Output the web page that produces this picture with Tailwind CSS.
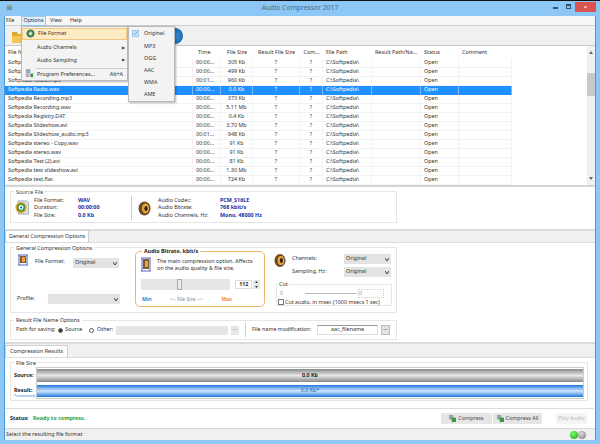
<!DOCTYPE html>
<html lang="en">
<head>
  <meta charset="UTF-8">
  <title>Audio Compressor 2017</title>
  <script src="https://cdn.jsdelivr.net/npm/@tailwindcss/browser@4"></script>
</head>
<body class="bg-[#8cc7f5] text-[#333] font-['Noto_Sans',sans-serif] text-[5.4px] leading-none overflow-hidden">
  <div class="relative w-[600px] h-[444px] overflow-hidden">
    <!-- title bar -->
    <div class="h-[1px] bg-[#111]"></div>
    <div class="relative h-[15px] flex items-center justify-center text-[6.8px] text-[#4b6b86]">
      <svg class="absolute left-[6px] top-[3px] w-[7px] h-[7px]" viewBox="0 0 8 8"><rect x="1" y="2" width="6" height="5" fill="#6f94ad"/><rect x="3" y="0" width="2" height="3" fill="#c9a968"/></svg>
      <span>Audio Compressor 2017</span>
      <div class="absolute left-[553px] top-[6px] w-[5px] h-[1.5px] bg-[#33536b]"></div>
      <div class="absolute left-[566px] top-[3px] w-[5px] h-[5px] border border-[#33536b] border-t-2"></div>
      <div class="absolute left-[575px] top-[1px] w-[21px] h-[10px] bg-[#d9534f] flex items-center justify-center text-white text-[6px] font-bold">×</div>
    </div>

    <div class="mx-[4px] w-[592px] border-x border-[#4a9ae0]">
      <!-- menu bar -->
      <div class="h-[10px] bg-[#f6f6f6] border-b border-[#cfcfcf] flex items-center">
        <span class="pl-[1px] w-[16px]">File</span>
        <span class="w-[25px] h-[10px] flex items-center justify-center bg-[#e5f1fb] border border-[#9cc8ea]">Options</span>
        <span class="pl-[4px] w-[24px]">View</span>
        <span>Help</span>
      </div>
      <!-- toolbar -->
      <div class="relative h-[20px] bg-[#f0f0f0] border-b border-[#c8c8c8]">
        <svg class="absolute left-[7px] top-[3px] w-[12px] h-[14px]" viewBox="0 0 12 14"><path d="M0 3h5l1 2h6v9H0z" fill="#e0a92e"/><path d="M0 7h12v7H0z" fill="#f2c758"/></svg>
        <div class="absolute left-[162px] top-[2px] w-[16px] h-[16px] rounded-full bg-[radial-gradient(circle_at_50%_50%,#3f93dc,#12579c)]"></div>
      </div>

      <!-- file list -->
      <div class="relative h-[141px] bg-white border-b-2 border-[#d4d4d4]">
        <div id="head" class="flex h-[12.5px] items-center pt-[1px]"></div>
        <div id="rows"></div>
        <div class="absolute left-[582px] top-0 bottom-0 w-[8px] bg-[#f0f0f0] flex flex-col justify-between items-center py-[5px]">
          <svg class="w-[4px] h-[3px]" viewBox="0 0 4 3"><path d="M0 3 2 0l2 3z" fill="#666"/></svg>
          <svg class="w-[4px] h-[3px]" viewBox="0 0 4 3"><path d="M0 0h4L2 3z" fill="#666"/></svg>
        </div>
        <div class="absolute left-[582px] top-[27px] w-[8px] h-[23px] bg-[#c9c9c9]"></div>
      </div>

      <!-- source file -->
      <div class="h-[42px] bg-white pt-[4px] pl-[5px]">
        <div class="relative w-[387px] h-[32px] border border-[#e6e6e6] flex items-center">
          <span class="absolute left-[3px] -top-[2px] bg-white px-[2px] text-[#444]">Source File</span>
          <svg class="ml-[3px] mt-[1px] w-[16px] h-[15px] shrink-0" viewBox="0 0 16 16"><path d="M4 1h9l2 2v12H4z" fill="#dbe7f3" stroke="#9ab"/><circle cx="7" cy="8" r="6" fill="#e8a020"/><circle cx="7" cy="8" r="4.2" fill="#2d9b46"/><circle cx="7" cy="8" r="2.6" fill="#fff"/><circle cx="7" cy="8" r="1.2" fill="#1a5fb4"/></svg>
          <div class="ml-[4px] mt-[2px] w-[44px] flex flex-col gap-[2.2px]"><span>File Format:</span><span>Duration:</span><span>File Size:</span></div>
          <div class="mt-[2px] w-[53px] flex flex-col gap-[2.2px] font-bold text-[#1d2fa8]"><span>WAV</span><span>00:00:00</span><span>0.0 Kb</span></div>
          <div class="w-px h-[24px] bg-[#ccc] mt-[2px]"></div>
          <svg class="ml-[6px] mt-[2px] w-[13px] h-[15px] shrink-0" viewBox="0 0 13 15"><ellipse cx="6.5" cy="7.5" rx="6" ry="7" fill="#6b4a2a"/><ellipse cx="7.5" cy="7.5" rx="3.6" ry="5" fill="#e8a63a"/><ellipse cx="8" cy="7.5" rx="1.6" ry="2.6" fill="#222"/></svg>
          <div class="ml-[7px] mt-[2px] w-[62px] flex flex-col gap-[2.2px]"><span>Audio Codec:</span><span>Audio Bitrate:</span><span>Audio Channels, Hz:</span></div>
          <div class="mt-[2px] flex flex-col gap-[2.2px] font-bold text-[#1d2fa8]"><span>PCM_S16LE</span><span>768 kbit/s</span><span>Mono, 48000 Hz</span></div>
        </div>
      </div>

      <!-- general options tab -->
      <div class="h-[2px] bg-[#dcdcdc]"></div>
      <div class="h-[12px] bg-[#f0f0f0] border-b border-[#dcdcdc] flex items-end">
        <div class="w-[84px] h-[12px] bg-white border border-b-0 border-[#d0d0d0] flex items-center pl-[3px]">General Compression Options</div>
      </div>
      <div class="h-[99px] bg-white pt-[4px] pl-[5px]">
        <!-- general group -->
        <div class="relative w-[387px] h-[66px] border border-[#e6e6e6] flex">
          <span class="absolute left-[3px] -top-[2px] bg-white px-[2px]">General Compression Options</span>
          <div class="w-[119px] shrink-0 pl-[6px] pt-[6px] flex flex-col justify-between pb-[8px]">
            <div class="flex items-start">
              <svg class="w-[12px] h-[12px] shrink-0" viewBox="0 0 12 12"><path d="M1 1h10M1 11h10M2 1v10M10 1v10" stroke="#5560c0" fill="none"/><rect x="3" y="2" width="6" height="7" fill="#7a5a30"/><rect x="5" y="3" width="3" height="5" fill="#e8a63a"/></svg>
              <span class="ml-[6px] mt-[5px] w-[38px] shrink-0">File Format:</span>
              <div class="mt-[4px] w-[46px] h-[10px] bg-[#e3e3e3] flex items-center justify-between px-[2px]"><span>Original</span><svg class="w-[4px] h-[3px]" viewBox="0 0 4 3"><path d="M0 0l2 3 2-3" stroke="#444" fill="none"/></svg></div>
            </div>
            <div class="flex items-center">
              <span class="w-[31px] shrink-0">Profile:</span>
              <div class="w-[72px] h-[10px] bg-[#e3e3e3] flex items-center justify-end px-[2px]"><svg class="w-[4px] h-[3px]" viewBox="0 0 4 3"><path d="M0 0l2 3 2-3" stroke="#444" fill="none"/></svg></div>
            </div>
          </div>
          <!-- bitrate -->
          <div class="relative mt-[3px] ml-[5px] w-[130px] h-[56px] border border-[#f0b46a] rounded-[5px] px-[4px] pt-[5px] shrink-0">
            <span class="absolute left-[6px] -top-[3px] bg-white px-[2px] font-bold text-[#222]">Audio Bitrate, kbit/s</span>
            <div class="flex">
              <svg class="w-[12px] h-[15px] shrink-0" viewBox="0 0 12 15"><path d="M1 1h10M1 14h10M2 1v13M10 1v13" stroke="#5560c0" fill="none"/><rect x="3" y="2" width="6" height="10" fill="#7a5a30"/><rect x="5" y="4" width="3" height="6" fill="#e8a63a"/></svg>
              <p class="ml-[5px] leading-[7px] mt-[1px]">The main compression option. Affects on the audio quality &amp; file size.</p>
            </div>
            <div class="flex items-center mt-[7px] ml-[1px]">
              <div class="relative w-[91px] h-[11px] bg-[#e6e6e6]"><div class="absolute left-[36px] top-0 w-[5px] h-[11px] bg-[#ececec] border border-[#aaa]"></div></div>
              <div class="ml-[5px] w-[17px] h-[9px] flex items-center justify-center border border-[#ddd] font-bold text-[#222]">112</div>
              <div class="ml-[1px] w-[7px] h-[9px] bg-[#e6e6e6] flex flex-col items-center justify-around"><svg class="w-[3px] h-[2px]" viewBox="0 0 4 3"><path d="M0 3 2 0l2 3z" fill="#333"/></svg><svg class="w-[3px] h-[2px]" viewBox="0 0 4 3"><path d="M0 0h4L2 3z" fill="#333"/></svg></div>
            </div>
            <div class="flex justify-between items-center mt-[7px] ml-[2px] w-[90px] text-[5px]">
              <span class="font-bold text-[#2b86d8]">Min</span><span class="text-[#888]">&lt;-- File Size --&gt;</span><span class="font-bold text-[#ef8a2e]">Max</span>
            </div>
          </div>
          <!-- channels -->
          <div class="ml-[6px] pt-[5px] flex-1 pr-[4px]">
            <div class="flex">
              <svg class="ml-[3px] w-[12px] h-[15px] shrink-0" viewBox="0 0 13 15"><ellipse cx="6.5" cy="7.5" rx="6" ry="7" fill="#6b4a2a"/><ellipse cx="7.5" cy="7.5" rx="3.6" ry="5" fill="#e8a63a"/><ellipse cx="8" cy="7.5" rx="1.6" ry="2.6" fill="#222"/></svg>
              <div class="ml-[6px] w-[52px] flex flex-col gap-[7.5px] pt-[3px]"><span>Channels:</span><span>Sampling, Hz:</span></div>
              <div class="flex flex-col gap-[3px] mt-[1px]">
                <div class="w-[47px] h-[10px] bg-[#e3e3e3] flex items-center justify-between px-[2px]"><span>Original</span><svg class="w-[4px] h-[3px]" viewBox="0 0 4 3"><path d="M0 0l2 3 2-3" stroke="#444" fill="none"/></svg></div>
                <div class="w-[47px] h-[10px] bg-[#e3e3e3] flex items-center justify-between px-[2px]"><span>Original</span><svg class="w-[4px] h-[3px]" viewBox="0 0 4 3"><path d="M0 0l2 3 2-3" stroke="#444" fill="none"/></svg></div>
              </div>
            </div>
            <div class="relative mt-[7px] ml-[5px] h-[22px] border border-[#e6e6e6] pl-[1px] pt-[6px]">
              <span class="absolute left-[1px] -top-[3px] bg-white px-[1px]">Cut</span>
              <div class="flex items-center text-[#999]"><span class="w-[5px] ml-[2px]">0</span><div class="w-[52px] h-px bg-[#bbb] ml-[20px]"></div><span class="ml-[1px] border border-dotted border-[#ccc] w-[26px] h-[9px] -my-[2px] flex items-center">0</span></div>
              <div class="flex items-center mt-[3px]"><span class="w-[6px] h-[6px] border border-[#777] bg-white mr-[1px]"></span>Cut audio, in msec (1000 msecs 1 sec)</div>
            </div>
          </div>
        </div>
        <!-- result name group -->
        <div class="relative mt-[7px] w-[387px] h-[20px] border border-[#e6e6e6] flex items-center pl-[5px]">
          <span class="absolute left-[3px] -top-[3px] bg-white px-[2px]">Result File Name Options</span>
          <span class="w-[42px]">Path for saving:</span>
          <span class="w-[5px] h-[5px] rounded-full border border-[#555] flex items-center justify-center"><span class="w-[3px] h-[3px] rounded-full bg-[#222]"></span></span>
          <span class="ml-[2px] w-[24px]">Source</span>
          <span class="w-[5px] h-[5px] rounded-full border border-[#555]"></span>
          <span class="ml-[3px] w-[19px]">Other:</span>
          <div class="w-[112px] h-[9px] bg-[#e6e6e6]"></div>
          <div class="ml-[3px] w-[8px] h-[9px] bg-[#e6e6e6] text-center text-[#888]">...</div>
          <div class="ml-[6px] w-px h-[14px] bg-[#ccc]"></div>
          <span class="ml-[6px] w-[65px]">File name modification:</span>
          <div class="w-[61px] h-[10px] border border-[#ddd] border-t-[#999] flex items-center justify-center">aac_filename</div>
          <div class="ml-[3px] w-[9px] h-[10px] bg-[#e3e3e3] border border-[#bbb] text-center">...</div>
        </div>
      </div>

      <!-- results tab -->
      <div class="h-[2px] bg-[#dcdcdc]"></div>
      <div class="h-[14px] bg-[#f0f0f0] border-b border-[#dcdcdc] flex items-end">
        <div class="w-[63px] h-[12px] bg-white border border-b-0 border-[#d0d0d0] flex items-center pl-[4px]">Compression Results</div>
      </div>
      <div class="h-[70px] bg-white">
        <div class="flex pt-[4px] pl-[5px] h-[51px] border-b border-[#dcdcdc] mr-[1px]">
          <div class="relative w-[578px] h-[39px] border border-[#e6e6e6] pl-[25px] pt-[4px]">
            <span class="absolute left-[4px] -top-[2px] bg-white px-[1px]">File Size</span>
            <span class="absolute left-[3px] top-[10px] font-bold text-[#222]">Source:</span>
            <span class="absolute left-[3px] top-[25px] font-bold text-[#222]">Result:</span>
            <span class="absolute left-[3px] top-[31px] text-[4px] text-[#2b86d8]">*estimated</span>
            <div class="w-[548px] border border-[#ccc] py-[1px]">
              <div class="h-[13px] flex items-center justify-center font-bold text-[#222] bg-gradient-to-b from-[#8a8a8a] via-[#e8e8e8] to-[#8a8a8a]">0.0 Kb</div>
              <div class="h-[3px]"></div>
              <div class="h-[12px] flex items-center justify-center text-[#1e5fa8] bg-gradient-to-b from-[#1476dc] via-[#cfe8fc] to-[#1476dc]">0.0 Kb*</div>
            </div>
          </div>
        </div>
        <div class="flex items-center h-[19px] pl-[5px] pr-[8px]">
          <span class="font-bold text-[#222] w-[23px]">Status:</span>
          <span class="font-bold text-[#2f9e37]">Ready to compress.</span>
          <div class="ml-auto flex h-[11px] text-[#444]">
            <div class="w-[51px] bg-[#e6e6e6] flex items-center justify-center gap-[2px]"><svg class="w-[7px] h-[7px]" viewBox="0 0 8 8"><rect x="0" y="0" width="5" height="5" fill="#8aa"/><rect x="3" y="3" width="5" height="5" fill="#3a9a3a"/></svg>Compress</div>
            <div class="w-[50px] bg-[#e6e6e6] flex items-center justify-center gap-[2px] border-l border-white"><svg class="w-[7px] h-[7px]" viewBox="0 0 8 8"><rect x="0" y="0" width="5" height="5" fill="#8aa"/><rect x="3" y="3" width="5" height="5" fill="#3a9a3a"/></svg>Compress All</div>
            <div class="ml-[14px] w-[31px] bg-[#f4f4f4] flex items-center justify-center text-[#bbb]">Play Audio</div>
          </div>
        </div>
      </div>

      <!-- status bar -->
      <div class="h-[12px] bg-[#f0f0f0] border-t border-[#d8d8d8] flex items-center pl-[1px]">
        <span>Select the resulting file format</span>
        <div class="ml-auto mr-[9px] flex">
          <span class="w-[8px] h-[8px] rounded-full bg-[radial-gradient(circle_at_40%_35%,#7dff6a,#12a012)]"></span>
          <span class="w-[8px] h-[8px] rounded-full bg-[radial-gradient(circle_at_40%_35%,#ddd,#777)]"></span>
        </div>
      </div>
    </div>

    <!-- options menu -->
    <div class="absolute left-[21px] top-[26px] w-[107px] h-[55px] bg-[#f3f3f3] border border-[#bbb] shadow-[1px_1px_2px_rgba(0,0,0,0.3)] flex flex-col">
      <div class="h-[12px] mt-[1px] bg-[#fdebc4] border border-[#eec97f] flex items-center pl-[15px] relative">
        <svg class="absolute left-[3px] top-[0px] w-[9px] h-[9px]" viewBox="0 0 10 10"><circle cx="5" cy="5" r="4" fill="#4f9c5c" stroke="#356"/><circle cx="5" cy="5" r="1.5" fill="#fff"/></svg>
        File Format
      </div>
      <div class="h-[13px] mt-[2px] flex items-center pl-[15px] justify-between pr-[2px]">Audio Channels<span class="text-[4px]">▶</span></div>
      <div class="h-[13px] flex items-center pl-[15px] justify-between pr-[2px]">Audio Sampling<span class="text-[4px]">▶</span></div>
      <div class="h-px bg-[#ccc] ml-[14px] mt-[1px]"></div>
      <div class="h-[12px] flex items-center pl-[15px] justify-between pr-[4px] relative">
        <svg class="absolute left-[3px] top-[1px] w-[9px] h-[9px]" viewBox="0 0 10 10"><rect x="1" y="0" width="5" height="5" fill="#9ab"/><rect x="1" y="5" width="4" height="4" fill="#c8a0d8"/><rect x="6" y="5" width="3" height="4" fill="#3a9a3a"/></svg>
        <span>Program Preferences...</span><span>Alt+A</span>
      </div>
    </div>
    <!-- format submenu -->
    <div class="absolute left-[128px] top-[26px] w-[47px] h-[76px] bg-[#f3f3f3] border border-[#bbb] shadow-[1px_1px_2px_rgba(0,0,0,0.3)] pl-[15px] pt-[1px] flex flex-col">
      <svg class="absolute left-[3px] top-[3px] w-[7px] h-[7px] bg-[#cfe6f7] border border-[#9cc8ea]" viewBox="0 0 8 8"><path d="M1 4l2 2 4-5" stroke="#2a70b0" fill="none"/></svg>
      <span class="h-[12.4px] flex items-center">Original</span>
      <span class="h-[12.4px] flex items-center">MP3</span>
      <span class="h-[12.4px] flex items-center">OGG</span>
      <span class="h-[12.4px] flex items-center">AAC</span>
      <span class="h-[12.4px] flex items-center">WMA</span>
      <span class="h-[12.4px] flex items-center">AME</span>
    </div>
  </div>

  <script>
    const cols = [
      ['File N', 188], ['Time', 28], ['File Size', 32], ['Result File Size', 47], ['Com...', 23],
      ['File Path', 49], ['Result Path/Na...', 49], ['Status', 38], ['Comment', 53]
    ];
    const files = [
      ['Softp', '00:00...', '305 Kb'],
      ['Softp', '00:00...', '499 Kb'],
      ['Softpedia Radio.mp3', '00:01...', '960 Kb'],
      ['Softpedia Radio.wav', '00:00...', '0.0 Kb'],
      ['Softpedia Recording.mp3', '00:00...', '373 Kb'],
      ['Softpedia Recording.wav', '00:00...', '5.11 Mb'],
      ['Softpedia Registry.DAT', '00:00...', '0.4 Kb'],
      ['Softpedia Slideshow.avi', '00:00...', '3.70 Mb'],
      ['Softpedia Slideshow_audio.mp3', '00:01...', '948 Kb'],
      ['Softpedia stereo - Copy.wav', '00:00...', '91 Kb'],
      ['Softpedia stereo.wav', '00:00...', '91 Kb'],
      ['Softpedia Test (2).avi', '00:00...', '81 Kb'],
      ['Softpedia test slideshow.avi', '00:00...', '1.30 Mb'],
      ['Softpedia test.flac', '00:00...', '724 Kb']
    ];
    const center = [false, false, true, true, true, false, false, false, false];

    document.getElementById('head').innerHTML = cols.map((c, i) =>
      `<span class="${center[i] ? 'text-center' : 'pl-[3px]'} ${i === 1 ? 'pl-[5px]' : ''}" style="width:${c[1]}px">${c[0]}</span>`).join('');

    document.getElementById('rows').innerHTML = files.map((f, n) => {
      const cells = [f[0], f[1], f[2], '?', '?', 'C:\\Softpedia\\', '', 'Open', ''];
      const sel = n === 3;
      return `<div class="flex h-[9px] w-[507px] items-center ${sel ? 'bg-[#1e90ff] text-white' : 'border-b border-[#f3f3f3]'}">` +
        cells.map((t, i) => `<span class="h-full flex items-center whitespace-nowrap border-r ${sel ? 'border-white/40' : 'border-[#f3f3f3]'} ${center[i] ? 'justify-center' : 'pl-[3px]'}" style="width:${cols[i][1]}px">${t}</span>`).join('') +
        `</div>`;
    }).join('');
  </script>
</body>
</html>
